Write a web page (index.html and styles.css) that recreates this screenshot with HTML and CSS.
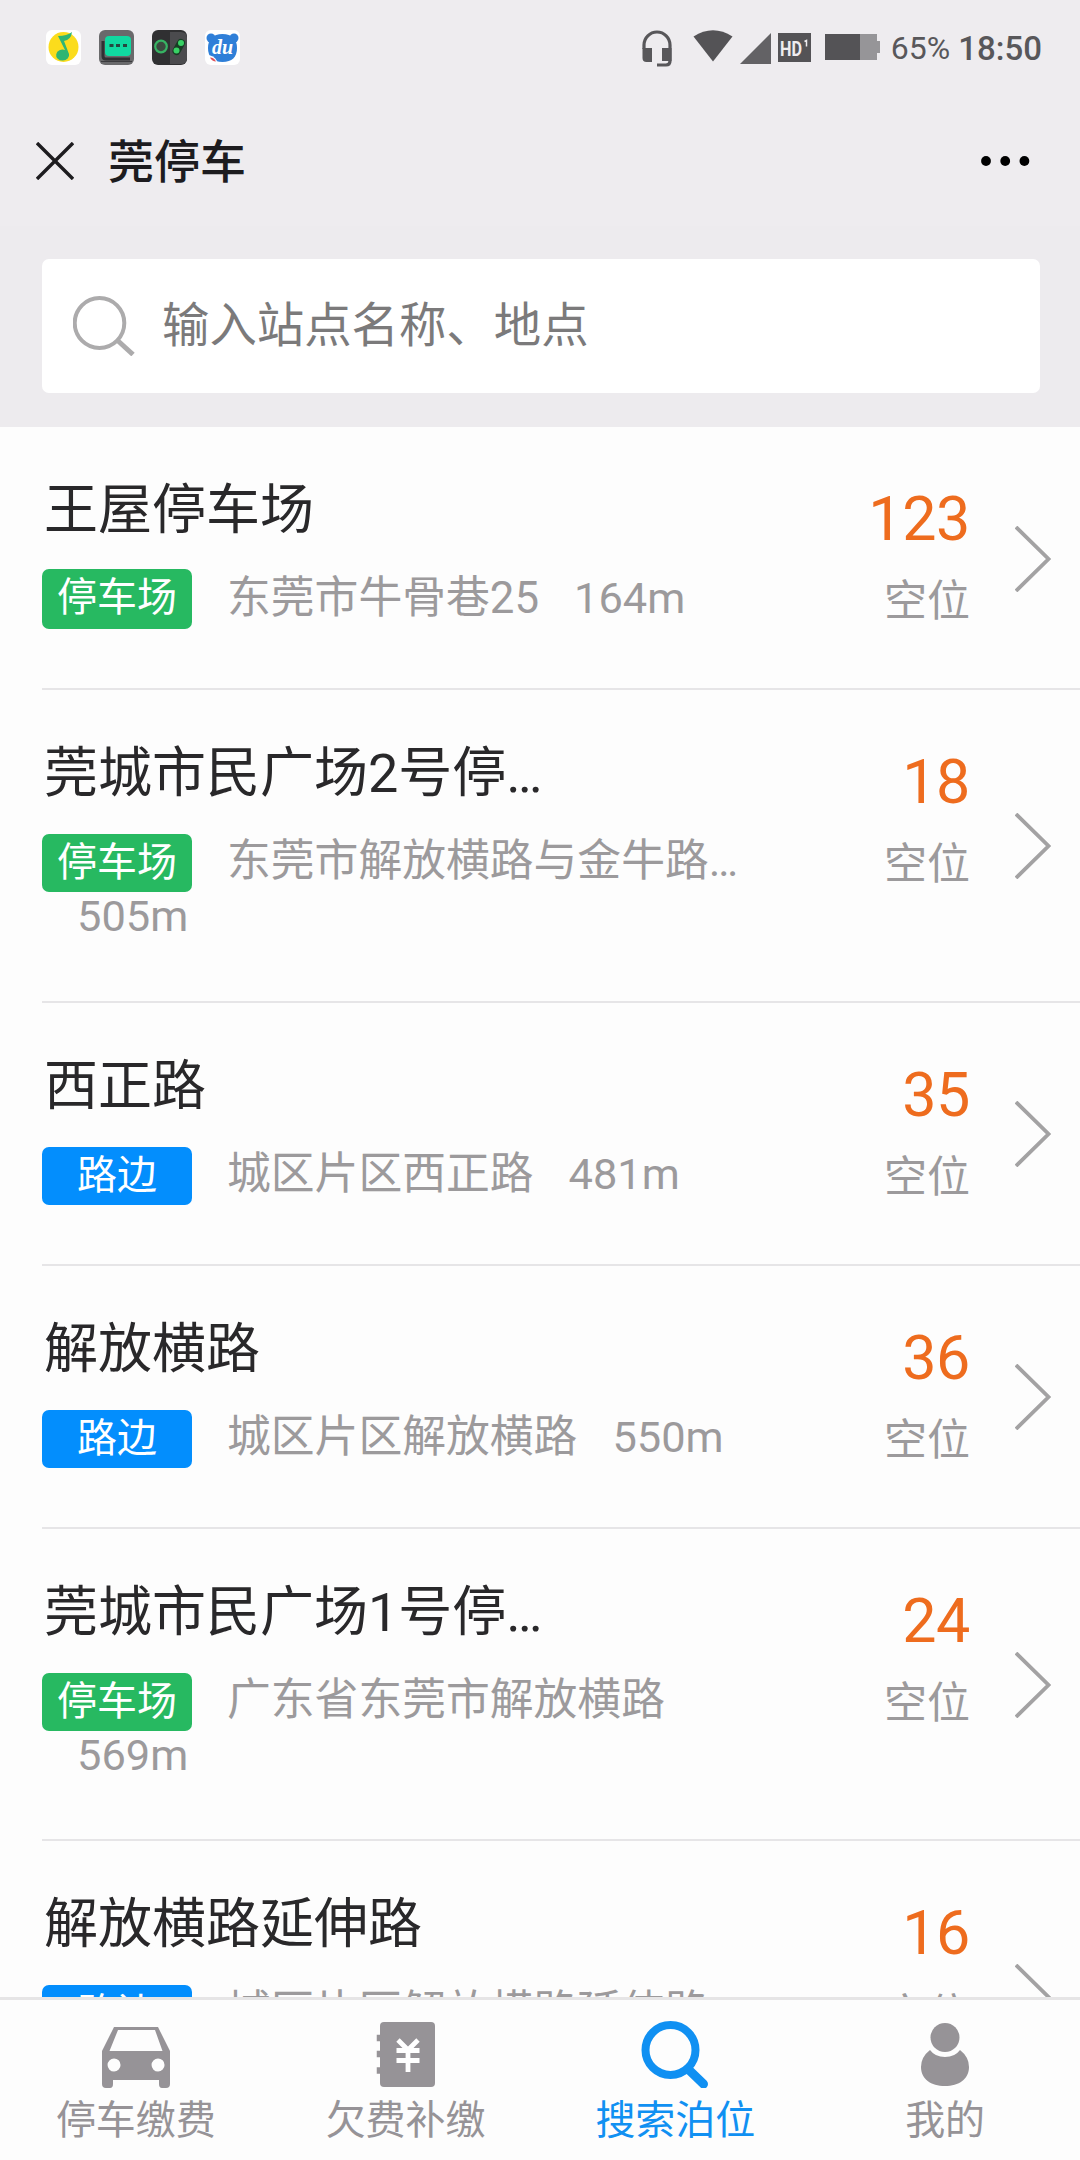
FILE: index.html
```html
<!DOCTYPE html>
<html lang="zh-CN">
<head>
<meta charset="UTF-8">
<meta name="viewport" content="width=device-width, initial-scale=1.0">
<title>莞停车</title>
<link rel="stylesheet" href="styles.css">
</head>
<body>
<div class="page">
  <!-- Status bar -->
  <div class="status-bar">
    <div class="status-apps">
      <svg width="35" height="35" viewBox="0 0 35 35">
        <rect width="35" height="35" rx="6" fill="#fff"/>
        <circle cx="17.5" cy="17" r="15" fill="#fbdc1c"/>
        <path d="M12 6q9 0 14-4-1 8-8 9l5 13a6.500 5.500 0 1 1-4-4z" fill="#2fb573"/>
      </svg>
      <svg width="35" height="35" viewBox="0 0 35 35">
        <rect width="35" height="35" rx="6" fill="#69696b"/>
        <path d="M4 11v15q0 3 3 3h24" fill="none" stroke="#303033" stroke-width="3"/>
        <path d="M2 31.500h31" stroke="#3b3b3e" stroke-width="1"/>
        <rect x="6" y="6" width="26" height="20" rx="4" fill="#10d9a0"/>
        <path d="M10.500 14h4v3h-4zM17 14h4v3h-4zM24 14h4v3h-4z" fill="#24483f"/>
      </svg>
      <svg width="35" height="35" viewBox="0 0 35 35">
        <rect width="35" height="35" rx="6" fill="#303032"/>
        <path d="M18 2h11q6 0 6 6v20q0 6-6 6H18z" fill="#4b4b4e"/>
        <circle cx="9" cy="16.500" r="5.800" fill="#3c4a40" stroke="#37b363" stroke-width="2.200"/>
        <path d="M24.500 21l4.500-8" stroke="#173d24" stroke-width="8" stroke-linecap="round"/>
        <circle cx="29" cy="13" r="3" fill="#38d165"/>
        <circle cx="24.500" cy="20.500" r="3" fill="#38d165"/>
      </svg>
      <svg width="35" height="35" viewBox="0 0 35 35">
        <rect width="35" height="35" rx="6" fill="#fff"/>
        <circle cx="6" cy="8" r="4.500" fill="#2f7fd8"/>
        <circle cx="29" cy="8" r="4.500" fill="#2f7fd8"/>
        <path d="M17.500 4C27 4 32 9 32 18s-5 14-14.500 14S3 27 3 18 8 4 17.500 4z" fill="#2f7fd8"/>
        <path d="M2 25q7 0 10 6l-3 3-7-2z" fill="#fff"/>
        <path d="M5 27.500q4 0 6 4-4 0-6-4z" fill="#e0525a"/>
        <text class="du-text" x="17.500" y="24" text-anchor="middle">du</text>
      </svg>
    </div>
    <div class="status-info">
      <svg class="ic-headset" width="30" height="37" viewBox="0 0 30 37">
        <path d="M2 19v-4a13 13 0 0 1 26 0v16q0 4-4 4h-9" fill="none" stroke="#58575a" stroke-width="3.200"/>
        <path d="M.5 18H10v14H4.500q-4 0-4-4zM20 18h9.500v13H20z" fill="#58575a"/>
      </svg>
      <svg class="ic-wifi" width="40" height="32" viewBox="0 0 40 32">
        <path d="M.5 6.500Q20-6 39.500 6.500L20 31.500z" fill="#545356"/>
      </svg>
      <svg class="ic-signal" width="32" height="31" viewBox="0 0 32 31">
        <path d="M31 0v31H0z" fill="#636265"/>
      </svg>
      <svg class="ic-hd" width="33" height="29" viewBox="0 0 33 29">
        <rect width="33" height="29" fill="#545356"/>
        <text class="hd-text" x="2" y="22.500" textLength="22" lengthAdjust="spacingAndGlyphs">HD</text>
        <path d="M26.500 8.500l2-1v6" fill="none" stroke="#eeecef" stroke-width="1.500"/>
      </svg>
      <svg class="ic-battery" width="55" height="26" viewBox="0 0 55 26">
        <path d="M35 0h17v7h3v12h-3v7H35z" fill="#969598"/>
        <path d="M0 0h35v26H0z" fill="#545356"/>
      </svg>
      <span class="battery-text">65%</span>
      <span class="clock">18:50</span>
    </div>
  </div>

  <!-- Title bar -->
  <div class="title-bar">
    <svg width="38" height="38" viewBox="0 0 38 38">
      <path d="M1 1l36 36M37 1L1 37" stroke="#1d1c1f" stroke-width="3.400"/>
    </svg>
    <h1 class="page-title">莞停车</h1>
    <svg class="more" width="50" height="12" viewBox="0 0 50 12">
      <circle cx="6" cy="6" r="4.900"/>
      <circle cx="25.200" cy="6" r="4.900"/>
      <circle cx="44.400" cy="6" r="4.900"/>
    </svg>
  </div>

  <!-- Search -->
  <div class="search-wrap">
    <div class="search-box">
      <svg width="62" height="60" viewBox="0 0 62 60">
        <ellipse cx="26.500" cy="27" rx="24.800" ry="25" fill="none" stroke="#acabac" stroke-width="4"/>
        <path d="M43.500 43.500L60 58.500" stroke="#acabac" stroke-width="5"/>
      </svg>
      <span class="placeholder">输入站点名称、地点</span>
    </div>
  </div>

  <!-- Parking list -->
  <ul class="parking-list">
    <li class="parking-item">
      <div class="info">
        <div class="name">王屋停车场</div>
        <div class="meta">
          <span class="tag tag-lot">停车场</span>
          <span class="address">东莞市牛骨巷25</span>
          <span class="distance">164m</span>
        </div>
      </div>
      <div class="spaces">
        <div class="count">123</div>
        <div class="label">空位</div>
      </div>
      <svg class="arrow" width="36" height="66" viewBox="0 0 36 66"><path d="M1 1l32.500 32L1 65"/></svg>
    </li>
    <li class="parking-item tall">
      <div class="info">
        <div class="name">莞城市民广场2号停…</div>
        <div class="meta">
          <span class="tag tag-lot">停车场</span>
          <span class="address">东莞市解放横路与金牛路…</span>
          <span class="distance">505m</span>
        </div>
      </div>
      <div class="spaces">
        <div class="count">18</div>
        <div class="label">空位</div>
      </div>
      <svg class="arrow" width="36" height="66" viewBox="0 0 36 66"><path d="M1 1l32.500 32L1 65"/></svg>
    </li>
    <li class="parking-item">
      <div class="info">
        <div class="name">西正路</div>
        <div class="meta">
          <span class="tag tag-road">路边</span>
          <span class="address">城区片区西正路</span>
          <span class="distance">481m</span>
        </div>
      </div>
      <div class="spaces">
        <div class="count">35</div>
        <div class="label">空位</div>
      </div>
      <svg class="arrow" width="36" height="66" viewBox="0 0 36 66"><path d="M1 1l32.500 32L1 65"/></svg>
    </li>
    <li class="parking-item">
      <div class="info">
        <div class="name">解放横路</div>
        <div class="meta">
          <span class="tag tag-road">路边</span>
          <span class="address">城区片区解放横路</span>
          <span class="distance">550m</span>
        </div>
      </div>
      <div class="spaces">
        <div class="count">36</div>
        <div class="label">空位</div>
      </div>
      <svg class="arrow" width="36" height="66" viewBox="0 0 36 66"><path d="M1 1l32.500 32L1 65"/></svg>
    </li>
    <li class="parking-item tall">
      <div class="info">
        <div class="name">莞城市民广场1号停…</div>
        <div class="meta">
          <span class="tag tag-lot">停车场</span>
          <span class="address">广东省东莞市解放横路</span>
          <span class="distance">569m</span>
        </div>
      </div>
      <div class="spaces">
        <div class="count">24</div>
        <div class="label">空位</div>
      </div>
      <svg class="arrow" width="36" height="66" viewBox="0 0 36 66"><path d="M1 1l32.500 32L1 65"/></svg>
    </li>
    <li class="parking-item tall">
      <div class="info">
        <div class="name">解放横路延伸路</div>
        <div class="meta">
          <span class="tag tag-road">路边</span>
          <span class="address">城区片区解放横路延伸路</span>
        </div>
      </div>
      <div class="spaces">
        <div class="count">16</div>
        <div class="label">空位</div>
      </div>
      <svg class="arrow" width="36" height="66" viewBox="0 0 36 66"><path d="M1 1l32.500 32L1 65"/></svg>
    </li>
  </ul>

  <!-- Bottom tabs -->
  <div class="tab-bar">
    <div class="tab">
      <svg width="68" height="68" viewBox="0 0 68 68">
        <path fill-rule="evenodd" d="M12 7h44l12 24v33q0 4-4 4h-4q-3 0-3-4v-4H11v4q0 4-3 4H4q-4 0-4-4V31zM16 10L7.500 31h53L53 10zM12 38.500a6.500 6.500 0 1 0 .1 13 6.500 6.500 0 1 0-.1-13zM56 38.500a6.500 6.500 0 1 0 .1 13 6.500 6.500 0 1 0-.1-13z" fill="#969397"/>
      </svg>
      <span>停车缴费</span>
    </div>
    <div class="tab">
      <svg width="60" height="68" viewBox="0 0 60 68">
        <rect x="4" y="2" width="55" height="65" rx="4" fill="#969397"/>
        <path d="M4 15.500H1.500v5H4M4 31.500H1.500v5H4M4 48H1.500v5H4" fill="#969397" stroke="#969397" stroke-width="1.500"/>
        <path d="M22 20l10 10 10-10M20.500 30.500h23M20.500 40.500h23M32 30v22" fill="none" stroke="#fff" stroke-width="4.800"/>
      </svg>
      <span>欠费补缴</span>
    </div>
    <div class="tab active">
      <svg width="68" height="68" viewBox="0 0 68 68">
        <circle cx="29.500" cy="30" r="25" fill="none" stroke="#1090f2" stroke-width="8"/>
        <path d="M47 49l15.500 15" stroke="#1090f2" stroke-width="9" stroke-linecap="round"/>
      </svg>
      <span>搜索泊位</span>
    </div>
    <div class="tab">
      <svg width="50" height="68" viewBox="0 0 50 68">
        <circle cx="25" cy="17.500" r="14.500" fill="#969397"/>
        <path d="M10 30Q15 37 25 37T40 30Q49 37 49 47C49 59 39 66 25 66S1 59 1 47Q1 37 10 30z" fill="#969397"/>
      </svg>
      <span>我的</span>
    </div>
  </div>
</div>
</body>
</html>
```
FILE: styles.css
```css
* {
    box-sizing: border-box;
}

body {
    margin: 0;
    font-family: Roboto, 'Noto Sans CJK SC', sans-serif;
    background-color: #fdfdfd;
}

svg {
    display: block;
    flex-shrink: 0;
}

.page {
    display: flex;
    flex-direction: column;
    width: 1080px;
    height: 2160px;
    overflow: hidden;
}

/* Status Bar */
.status-bar {
    display: flex;
    justify-content: space-between;
    height: 96px;
    padding: 0 38px 0 46px;
    background-color: #eeecef;
}

.status-apps {
    display: flex;
    gap: 18px;
    padding-top: 30px;
}

.du-text {
    font: italic bold 20px 'Liberation Serif', serif;
    fill: #fff;
}

.status-info {
    display: flex;
    align-items: center;
    color: #58575a;
}

.ic-headset {
    margin-left: 1px;
}

.ic-wifi {
    margin: -5px 0 0 21px;
}

.ic-signal {
    margin-left: 7px;
}

.ic-hd {
    margin: -2px 0 0 6px;
}

.hd-text {
    font: bold 21px Roboto, sans-serif;
    fill: #eeecef;
}

.ic-battery {
    margin: -2px 0 0 14px;
}

.battery-text {
    margin-left: 11px;
    font-size: 32px;
}

.clock {
    margin-left: 8px;
    font-size: 33px;
    font-weight: 500;
}

/* Title Bar */
.title-bar {
    display: flex;
    align-items: center;
    height: 130px;
    padding: 0 50px 0 36px;
    background-color: #eeecef;
}

.page-title {
    flex: 1;
    margin: 1px 0 0 34px;
    font-size: 46px;
    font-weight: 500;
    line-height: 60px;
    color: #1d1c1f;
}

/* Search */
.search-wrap {
    height: 201px;
    padding: 33px 40px 34px 42px;
    background-color: #edebee;
}

.search-box {
    display: flex;
    align-items: center;
    height: 134px;
    padding-left: 31px;
    background-color: #fff;
    border-radius: 7px;
}

.placeholder {
    margin-left: 27px;
    font-size: 47.4px;
    line-height: 60px;
    color: #7b7a7b;
}

/* Parking List */
.parking-list {
    flex: 1;
    min-height: 0;
    margin: 0;
    padding: 0 0 0 42px;
    overflow: hidden;
    list-style: none;
}

.parking-item {
    display: flex;
    height: 263px;
    border-bottom: 2px solid #e6e5e7;
}

.parking-item.tall {
    height: 312.5px;
}

.info {
    width: 740px;
    padding-top: 54px;
}

.name {
    padding-left: 2px;
    font-size: 54px;
    line-height: 60px;
    color: #29282a;
    white-space: nowrap;
}

.meta {
    display: flex;
    flex-wrap: wrap;
    margin-top: 30px;
    font-size: 43.8px;
    color: #9c9a9c;
}

.tag {
    width: 150px;
    height: 58px;
    border-radius: 7px;
    font-size: 40px;
    line-height: 58px;
    text-align: center;
    color: #fff;
}

.parking-item:first-child .tag {
    height: 60px;
    margin-top: -2px;
}

.tag-lot {
    background-color: #27b961;
}

.tag-road {
    background-color: #038efd;
}

.address {
    margin-left: 35px;
    line-height: 55px;
}

.distance {
    margin-left: 35px;
    font-size: 43.4px;
    line-height: 55px;
}

.tall .distance {
    line-height: 50px;
}

.spaces {
    width: 188px;
    padding-top: 57px;
    text-align: right;
}

.count {
    font-size: 61px;
    letter-spacing: -0.4px;
    line-height: 70px;
    color: #ee6c1e;
}

.label {
    margin-top: 22px;
    font-size: 43px;
    line-height: 50px;
    color: #9c9a9c;
}

.arrow {
    align-self: center;
    margin: 2px 0 0 45px;
    fill: none;
    stroke: #a3a2a3;
    stroke-width: 3.8px;
}

/* Tab Bar */
.tab-bar {
    display: flex;
    height: 163px;
    padding: 20px 0 0 1px;
    border-top: 3px solid #e6e5e6;
}

.tab {
    display: flex;
    flex: 1;
    flex-direction: column;
    align-items: center;
    gap: 5px;
    font-size: 40px;
    line-height: 56px;
    color: #969397;
}

.tab.active {
    color: #1090f2;
}
```
